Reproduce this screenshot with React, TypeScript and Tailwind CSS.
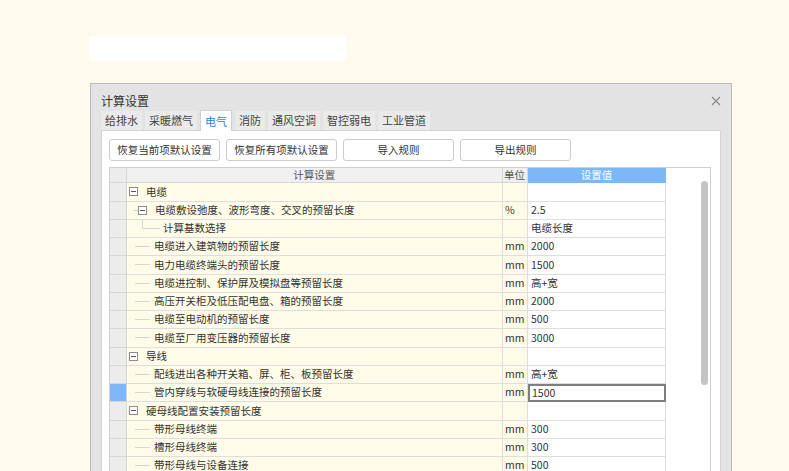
import React from 'react';

type Row = {
  label: string;
  kind: 'g0' | 'g1' | 'l1' | 'l2';
  unit?: string;
  value?: string;
  selected?: boolean;
};

const rows: Row[] = [
  { label: '电缆', kind: 'g0' },
  { label: '电缆敷设弛度、波形弯度、交叉的预留长度', kind: 'g1', unit: '%', value: '2.5' },
  { label: '计算基数选择', kind: 'l2', value: '电缆长度' },
  { label: '电缆进入建筑物的预留长度', kind: 'l1', unit: 'mm', value: '2000' },
  { label: '电力电缆终端头的预留长度', kind: 'l1', unit: 'mm', value: '1500' },
  { label: '电缆进控制、保护屏及模拟盘等预留长度', kind: 'l1', unit: 'mm', value: '高+宽' },
  { label: '高压开关柜及低压配电盘、箱的预留长度', kind: 'l1', unit: 'mm', value: '2000' },
  { label: '电缆至电动机的预留长度', kind: 'l1', unit: 'mm', value: '500' },
  { label: '电缆至厂用变压器的预留长度', kind: 'l1', unit: 'mm', value: '3000' },
  { label: '导线', kind: 'g0' },
  { label: '配线进出各种开关箱、屏、柜、板预留长度', kind: 'l1', unit: 'mm', value: '高+宽' },
  { label: '管内穿线与软硬母线连接的预留长度', kind: 'l1', unit: 'mm', value: '1500', selected: true },
  { label: '硬母线配置安装预留长度', kind: 'g0' },
  { label: '带形母线终端', kind: 'l1', unit: 'mm', value: '300' },
  { label: '槽形母线终端', kind: 'l1', unit: 'mm', value: '300' },
  { label: '带形母线与设备连接', kind: 'l1', unit: 'mm', value: '500' },
];

const tabs = ['给排水', '采暖燃气', '电气', '消防', '通风空调', '智控弱电', '工业管道'];
const buttons = ['恢复当前项默认设置', '恢复所有项默认设置', '导入规则', '导出规则'];

function Expander() {
  return (
    <span className="w-[9px] h-[9px] shrink-0 border border-[#8c8c8c] bg-white flex items-center justify-center">
      <span className="w-[5px] h-px bg-[#555]" />
    </span>
  );
}

function TreeCell({ row }: { row: Row }) {
  if (row.kind === 'g0') {
    return (
      <>
        <span className="ml-[2px]" />
        <Expander />
        <span className="ml-[8px]">{row.label}</span>
      </>
    );
  }
  if (row.kind === 'g1') {
    return (
      <>
        <span className="ml-[6px] w-[5px] border-t border-[#d6d6d6]" />
        <Expander />
        <span className="ml-[8px]">{row.label}</span>
      </>
    );
  }
  if (row.kind === 'l2') {
    return (
      <>
        <span className="ml-[15px] w-[18px] h-[9px] self-start border-l border-b border-[#d6d6d6]" />
        <span className="ml-[3px]">{row.label}</span>
      </>
    );
  }
  return (
    <>
      <span className="ml-[8px] w-[15px] border-t border-[#d6d6d6]" />
      <span className="ml-[4px]">{row.label}</span>
    </>
  );
}

export default function App() {
  return (
    <div className="h-[471px] w-full overflow-hidden bg-[#fefaee] text-[#333] font-['Noto_Sans_CJK_SC',sans-serif]">
      <div className="ml-[89px] mt-[36px] w-[257px] h-[25px] bg-white" />

      <div className="relative ml-[90px] mt-[22px] w-[642px] h-[420px] border border-[#bcbcbc] bg-[#e3e3e3] px-[10px]">
        <div className="pt-[10px] h-[24px] text-[12px] leading-[14px] text-[#333]">计算设置</div>

        {/* close */}
        <svg className="absolute right-[10px] top-[12px]" width="10" height="10" viewBox="0 0 10 10">
          <path d="M1 1 L9 9 M9 1 L1 9" stroke="#8a8a8a" strokeWidth="1.2" />
        </svg>

        {/* tabs */}
        <div className="flex items-end gap-[3px] h-[22px]">
          {tabs.map((t) =>
            t === '电气' ? (
              <div
                key={t}
                className="h-[21px] px-[4px] bg-white border-t border-l border-r border-[#d0d0d0] text-[11px] leading-[20px] text-[#2b7fd6] relative z-10 -mb-px"
              >
                {t}
              </div>
            ) : (
              <div key={t} className="h-[19px] px-[4px] bg-[#eaeaea] text-[11px] leading-[19px] text-[#444]">
                {t}
              </div>
            )
          )}
        </div>

        {/* panel */}
        <div className="bg-white border border-[#d3d3d3] pl-[7px] pr-[9px] pt-[8px] h-[400px]">
          <div className="flex gap-[6px]">
            {buttons.map((b) => (
              <div
                key={b}
                className="w-[111px] h-[22px] rounded-[3px] border border-[#cdcdcd] bg-white flex items-center justify-center text-[10.5px] text-[#333]"
              >
                {b}
              </div>
            ))}
          </div>

          {/* table */}
          <div className="mt-[6px] flex border-t border-l border-r border-[#cfcfcf] text-[10.5px] leading-none">
            <div className="flex flex-col">
              <div className="flex h-[15.25px] text-[#555]">
                <div className="w-[17px] shrink-0 bg-[#ececec] border-r border-b border-[#d6d6d6]" />
                <div className="w-[375.5px] shrink-0 bg-[#f0f0f0] border-r border-b border-[#d6d6d6] flex items-center justify-center">
                  计算设置
                </div>
                <div className="w-[25px] shrink-0 bg-[#f0f0f0] border-r border-b border-[#d6d6d6] flex items-center justify-center">
                  单位
                </div>
                <div className="w-[138px] shrink-0 bg-[#7db8f6] border-b border-[#7db8f6] flex items-center justify-center text-white">
                  设置值
                </div>
              </div>
              {rows.map((r) => (
                <div key={r.label} className="flex h-[18.25px]">
                  <div
                    className={`w-[17px] shrink-0 border-r border-b border-[#d6d6d6] ${
                      r.selected ? 'bg-[#80b7f6]' : 'bg-[#ececec]'
                    }`}
                  />
                  <div className="w-[375.5px] shrink-0 bg-[#fefce8] border-r border-b border-[#dedede] flex items-center whitespace-nowrap overflow-hidden">
                    <TreeCell row={r} />
                  </div>
                  <div className="w-[25px] shrink-0 bg-[#fefce8] border-r border-b border-[#dedede] flex items-center pl-[2.5px] whitespace-nowrap">
                    {r.unit}
                  </div>
                  {r.selected ? (
                    <div className="w-[138px] shrink-0 bg-white border-2 border-[#7e7e7e] flex items-center pl-[2.5px]">
                      {r.value}
                    </div>
                  ) : (
                    <div className="w-[138px] shrink-0 bg-white border-r border-b border-[#dedede] flex items-center pl-[3.5px] whitespace-nowrap">
                      {r.value}
                    </div>
                  )}
                </div>
              ))}
            </div>
            <div className="flex-1 bg-white flex flex-col">
              <div className="ml-auto mr-[2px] mt-[13px] w-[7px] h-[204px] rounded-full bg-[#c4c4c4]" />
            </div>
          </div>
        </div>
      </div>
    </div>
  );
}
